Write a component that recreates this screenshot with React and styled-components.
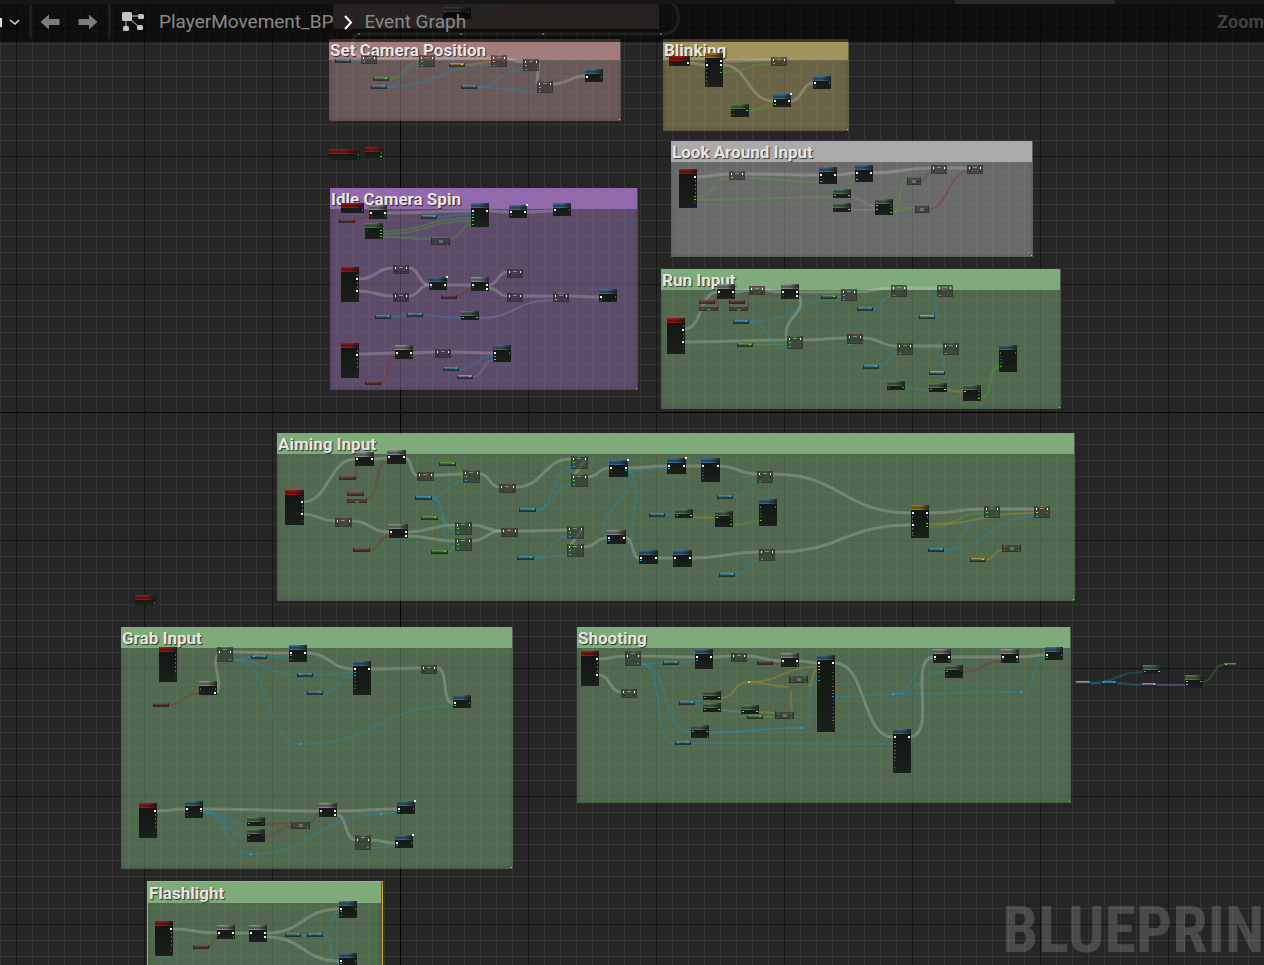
import React from "react";
import styled, { createGlobalStyle, css } from "styled-components";

const GlobalStyle = createGlobalStyle`
  * { box-sizing: border-box; }
  html, body, #root { height: 100%; }
  body {
    margin: 0;
    overflow: hidden;
    background: #262626;
    font-family: Roboto, "Liberation Sans", sans-serif;
  }
`;

const PIN = {
  w: "#f4f4f4",
  b: "#18a4ee",
  g: "#45e412",
  r: "#a80808",
  y: "#ffb91e",
  l: "#a3a6ee",
  m: "#a02a80",
  d: "#5c605c",
  B: "#1d4458",
  G: "#2c6420",
  R: "#4c1414",
  Y: "#80661c",
  P: "#5e3a78",
};

const HEAD = {
  r: ["#a81c1c", "#5e0808"],
  b: ["#467493", "#1c3a50"],
  g: ["#5c8460", "#263f28"],
  k: ["#989898", "#4a4a4a"],
  y: ["#a87d12", "#5c4204"],
};

const TONE = {
  b: "#4a9cc2",
  g: "#5aae42",
  r: "#92494a",
  y: "#c4a24c",
  l: "#a09ccb",
  w: "#a9b8a6",
  k: "#80867f",
};

const WIRE = {
  w: "rgba(225,230,225,0.24)",
  b: "rgba(25,145,200,0.3)",
  g: "rgba(80,180,40,0.3)",
  r: "rgba(150,35,35,0.34)",
  y: "rgba(205,155,30,0.32)",
  l: "rgba(140,145,215,0.3)",
};

/* ---------- graph data ---------- */

const fn = (tone, x, y, w, h, left = "", right = "") => ({ kind: "fn", tone, x, y, w, h, left, right });
const set = (tone, x, y, h = 9, w = 16) => {
  const low = h > 9 ? (tone === "b" ? "" : " b9") : "";
  const t = tone === "r" ? "R" : tone;
  return {
    kind: "set", tone, x, y, w, h,
    left: tone === "b" && h > 9 ? "w3" : `w1 ${t}5${low}`,
    right: tone === "b" && h > 9 ? "w3 b11" : `w1 ${t.toUpperCase()}5`,
  };
};
const get = (tone, x, y, w = 16) => ({ kind: "get", tone, x, y, w, h: 4, left: "", right: tone === "w" ? "b1" : `${tone}1` });
const conv = (x, y) => ({ kind: "get", tone: "b", x, y, w: 16, h: 4, left: "b1", right: "b1" });
const op = (x, y, w, h, left = "", right = "") => ({ kind: "op", tone: "k", x, y, w, h, left, right });
const dot = (tone, x, y) => ({ kind: "dot", tone, x, y, w: 2, h: 2, left: "", right: "" });

const COMMENTS = [
  { title: "", tone: "rose", x: 333, y: -20, w: 326, h: 49 },
  { title: "Set Camera Position", tone: "rose", x: 329, y: 39, w: 292, h: 82 },
  { title: "Blinking", tone: "gold", x: 663, y: 39, w: 186, h: 92 },
  { title: "Look Around Input", tone: "grey", x: 671, y: 141, w: 362, h: 116 },
  { title: "Idle Camera Spin", tone: "violet", x: 330, y: 188, w: 308, h: 202 },
  { title: "Run Input", tone: "green", x: 661, y: 269, w: 400, h: 140 },
  { title: "Aiming Input", tone: "green", x: 277, y: 433, w: 798, h: 168 },
  { title: "Grab Input", tone: "green", x: 121, y: 627, w: 392, h: 242 },
  { title: "Shooting", tone: "green", x: 577, y: 627, w: 494, h: 176 },
  { title: "Flashlight", tone: "green", x: 147, y: 881, w: 236, h: 140, selected: true },
];

const NODES = [
  // upper chain behind the toolbar
  fn("k", 443, 7, 28, 12, "b5", "b5"),
  dot("w", 358, 33), dot("w", 460, 33), dot("w", 542, 33), dot("w", 660, 33),

  // Set Camera Position
  get("b", 335, 59), set("b", 361, 55), get("g", 373, 77), get("b", 371, 85),
  set("g", 419, 55, 12), get("y", 449, 63), set("y", 491, 55, 12), set("g", 523, 59, 12),
  get("b", 461, 85), set("g", 537, 81, 12), fn("b", 585, 69, 18, 13, "w7 B11", "d7"),
  fn("r", 329, 149, 31, 11, "", "R1 d5 B9"), fn("r", 365, 147, 18, 11, "", "R1 d5 g9"),

  // Blinking
  fn("r", 669, 56, 21, 10, "", "w6"),
  fn("y", 705, 53, 18, 34, "d7 w11 d15 d19 d23 d27 G31", "w7 w11 B15 g19"),
  set("g", 771, 57), fn("b", 813, 76, 18, 13, "w6 B10", "d6"),
  fn("b", 773, 94, 18, 13, "w6 g10", "w6"), dot("w", 790, 93),
  fn("g", 731, 104, 18, 13, "G6 G10", "g6"),

  // Look Around Input
  fn("r", 679, 169, 18, 39, "", "w7 d11 d15 d19 d23 g27 g30 B33"),
  set("g", 729, 171), fn("b", 819, 167, 18, 17, "w7 B11 g14", "w7"),
  fn("b", 855, 165, 18, 17, "w7 B11 g14", "w7"),
  fn("g", 833, 189, 18, 9, "B6 g6", "l6"), fn("g", 833, 203, 18, 9, "B6", "l6"),
  fn("g", 875, 199, 18, 16, "l6 l10", "G6 G9 g13"),
  set("r", 931, 165), set("r", 967, 165),
  op(907, 177, 14, 8, "G1 G5", "R3"), op(915, 205, 14, 8, "G1 G5", "R3"),

  // Idle Camera Spin
  fn("r", 341, 203, 23, 10, "", "d6"), fn("k", 369, 205, 18, 14, "w7 r11", "w7 d10"),
  get("r", 339, 219), fn("g", 365, 223, 18, 16, "B7", "g7 g10 g13"), get("b", 421, 215),
  fn("b", 471, 203, 18, 24, "w7 b11 g14 g17 g21", "w7"),
  fn("b", 509, 205, 18, 13, "w6 G10", "w6"), dot("w", 526, 204),
  fn("b", 553, 203, 18, 13, "w6 B10", "d6"), op(431, 237, 19, 8, "G1 G5", "G1 d6"),
  fn("r", 341, 267, 18, 35, "", "d7 w11 d15 d19 w23 R27 B30"),
  set("r", 393, 265), set("r", 393, 293), fn("b", 429, 277, 18, 13, "w7 G10", "w7"),
  dot("w", 446, 276), fn("k", 471, 277, 18, 14, "w7 r10", "w7 w11"), get("r", 441, 295),
  set("r", 507, 269), set("r", 507, 293), set("l", 553, 293),
  fn("b", 599, 289, 18, 13, "w7 B11", "d7"), get("b", 375, 315), conv(407, 313),
  fn("g", 461, 311, 18, 9, "b6", "l6"),
  fn("r", 341, 343, 18, 35, "", "d7 w11 d15 d19 d23 R27 B30"),
  fn("k", 395, 345, 18, 14, "w7 r10", "w7 d10"), set("r", 435, 349),
  fn("b", 493, 345, 18, 17, "w7 b11 l14", "d7"), get("b", 443, 367), get("l", 457, 375), get("r", 365, 381),

  // Run Input
  fn("k", 717, 284, 18, 15, "w7 r11", "w7 d11"), set("r", 749, 286),
  fn("k", 781, 284, 18, 15, "w7 r11", "w7 w11"), get("r", 699, 300), get("r", 729, 300),
  op(699, 306, 19, 5, "r1", "r1"), op(729, 306, 19, 5, "r1", "r1"),
  get("g", 821, 295), set("g", 841, 289, 12), get("b", 857, 307),
  set("r", 891, 285, 12), set("r", 937, 285, 12), get("w", 919, 315),
  fn("r", 667, 318, 18, 36, "", "d7 w11 d15 d19 w23 R27 B30"),
  get("b", 733, 320), get("g", 737, 343), set("g", 787, 336, 13), set("r", 847, 334, 10),
  set("r", 897, 343, 12), set("r", 943, 343, 12), get("b", 863, 365), get("w", 929, 371),
  fn("b", 999, 345, 18, 27, "d7 B11 G14 G17 g21 R25", "d7 R11"),
  fn("g", 887, 381, 18, 9, "G6", "b6"), fn("g", 929, 383, 18, 9, "b6", "y6"),
  fn("g", 963, 385, 18, 16, "y6", "G6 G9 g13"),

  // Aiming Input
  fn("r", 285, 490, 19, 35, "", "B7 w11 d15 d19 w23 R27 B30"),
  fn("k", 355, 452, 19, 14, "w6 R10", "w6"), fn("k", 387, 450, 19, 14, "w6 R10", "w6"),
  get("r", 339, 476, 17), get("r", 347, 492, 17), op(347, 498, 20, 5, "r1", "r1"),
  set("r", 335, 518, 9, 17), fn("k", 389, 524, 19, 14, "w7 r10", "w7 w11"), get("r", 353, 548, 17),
  set("r", 417, 472, 9, 17), get("g", 439, 462, 17), set("g", 463, 470, 13, 17), get("b", 415, 496, 17),
  get("g", 421, 516, 17), set("g", 455, 522, 13, 17), set("g", 455, 538, 13, 17), get("g", 431, 550, 17),
  set("r", 499, 484, 9, 17), set("r", 501, 528, 9, 17), get("b", 519, 508, 17), get("b", 517, 556, 17),
  set("g", 571, 456, 13, 17), set("g", 571, 474, 13, 17), set("g", 567, 526, 13, 17), set("g", 567, 544, 13, 17),
  fn("b", 609, 460, 19, 17, "w7 B11", "w7 b10"), dot("w", 627, 459),
  fn("k", 607, 530, 19, 14, "w7 b10", "w7"), fn("b", 639, 550, 19, 14, "w7 b10", "w7"),
  get("b", 649, 513), fn("g", 675, 509, 18, 9, "b6", "y6"), fn("g", 715, 511, 18, 16, "y6", "G6 G9 g13"),
  fn("b", 667, 458, 19, 16, "w7 b10", "w7"), dot("w", 685, 457),
  fn("b", 701, 458, 19, 24, "w7 B11 B14 G17 P20", "w7"), set("r", 757, 471, 12), get("b", 717, 495),
  fn("b", 759, 499, 18, 27, "d7 B11 G14 G17 g21 R25", "d7 R11"),
  fn("b", 673, 550, 19, 17, "w7 B11 B14", "w7"), set("r", 759, 549, 12), get("b", 719, 573),
  fn("y", 911, 505, 18, 33, "w7 d11 d15 w19 d23 d27 G30", "w7 d11 y18 g21"),
  set("g", 984, 506, 12), set("y", 1034, 506, 12), get("b", 928, 548),
  op(1002, 544, 19, 8, "Y1 Y5", "Y1 d5"), get("y", 970, 558),

  // Grab Input
  fn("r", 135, 595, 21, 10, "", "d7"),
  fn("r", 159, 647, 18, 35, "", "d7 d11 d15 d19 d23 R27 B30"), set("b", 217, 647, 15),
  fn("k", 199, 681, 18, 14, "d7 r10", "d7 w11"), get("r", 153, 703), conv(251, 655),
  fn("b", 289, 645, 18, 17, "w7 b10 G14", "w7"), conv(297, 673), get("b", 307, 691),
  fn("b", 353, 661, 18, 34, "w7 b11 b14 P17 G20 G24 G27 R31", "w7 R11"), set("r", 421, 665),
  fn("b", 453, 695, 18, 13, "w7 b10", "d7"), dot("b", 300, 743),
  fn("r", 139, 803, 18, 35, "", "w7 d11 d15 d19 d23 R27 B30"),
  fn("b", 185, 801, 18, 17, "w7 B11 B14", "w7 b10"), fn("g", 247, 817, 18, 9, "b6", "r6"),
  fn("g", 247, 829, 18, 13, "b6 B10", "r6"), op(291, 821, 19, 8, "r1 r5", "r1 d5"),
  fn("k", 319, 803, 18, 14, "w7 r10", "w7 w11"), set("b", 355, 835, 15),
  fn("b", 397, 801, 18, 13, "w7 b10", "d7"), dot("w", 414, 800),
  fn("b", 395, 835, 18, 13, "w7 b10", "d7"), dot("w", 412, 834),
  dot("b", 250, 853), dot("b", 380, 813),

  // Shooting
  fn("r", 581, 651, 18, 35, "", "w7 d11 d15 d19 w23 R27 B30"), set("b", 625, 651, 15), set("r", 621, 689),
  conv(663, 661), fn("b", 695, 649, 18, 20, "w7 b11 B14 R17", "w7"), set("r", 731, 653), get("r", 757, 661),
  fn("k", 781, 653, 18, 14, "w7 r10", "w7 d11"),
  fn("b", 817, 655, 18, 77, "w7 y11 y14 G17 G21 b25 R28 R31", "w7 R11 R14 G17 G21 B24 B28 Y31 Y35 Y38 b41 B45 B48 P52 B55 G58 G62 Y65 B68 R72"),
  op(789, 675, 19, 8, "Y1 Y5", "Y1 d5"), fn("g", 703, 691, 18, 9, "b6", "y6"), get("b", 679, 701),
  fn("g", 703, 703, 18, 9, "b6", "l6"), fn("g", 741, 705, 18, 9, "l6", "y6"), get("g", 747, 715),
  op(775, 711, 19, 8, "Y1 G5", "Y1 d5"), fn("g", 691, 725, 18, 13, "b6", "b6 d11"), conv(675, 741),
  dot("y", 748, 681), dot("b", 801, 727),
  fn("b", 893, 729, 18, 44, "w7 B11 b14 P17 Y21 P24 Y28 B31 R35 B38 R41", "w7 B11"),
  fn("k", 933, 649, 18, 14, "w7 b10", "w7 d11"), fn("g", 945, 665, 18, 13, "b6 B10", "r6"),
  fn("k", 1001, 649, 18, 14, "w7 r10", "w7 d11"), fn("b", 1045, 647, 18, 13, "w7 b10", "d7"),
  dot("b", 892, 693), dot("b", 1020, 691),

  // loose nodes right of Shooting
  get("w", 1075, 681), conv(1101, 681), fn("g", 1143, 665, 18, 9, "b6", "y6"),
  { kind: "get", tone: "l", x: 1141, y: 683, w: 16, h: 4, left: "b1", right: "l1" },
  fn("g", 1185, 675, 18, 13, "y6 l9", "g6"),
  { kind: "get", tone: "k", x: 1223, y: 663, w: 14, h: 4, left: "g1", right: "m1" },

  // Flashlight
  fn("r", 155, 921, 18, 35, "", "w7 d11 d15 d19 d23 R27 B30"), fn("k", 217, 925, 18, 14, "w7 r10", "w7 d11"),
  fn("k", 249, 925, 18, 17, "w7", "w7 w11 R14"), get("r", 193, 945), get("b", 285, 933), conv(307, 933),
  fn("b", 339, 901, 18, 17, "w7 b10 G14", "d7"), fn("b", 339, 953, 18, 17, "w7 b10 G14", "d7"),
];

// Every run of four numbers is one wire: x1 y1 x2 y2.
const LINKS = {
  w: `377 58 419 58, 435 58 491 58, 507 59 523 62, 553 84 585 76,
    690 63 705 65, 723 61 771 60, 723 65 773 101, 791 101 813 83,
    697 177 729 174, 745 174 819 175, 837 175 855 173, 873 173 931 168, 947 168 967 168,
    387 213 471 211, 489 211 509 212, 527 212 553 211,
    359 279 393 268, 359 291 393 296, 409 268 429 285, 409 296 429 285, 447 285 471 285,
    489 285 507 272, 489 288 507 296, 523 296 553 296, 569 296 599 297,
    359 354 395 353, 413 353 435 352, 451 352 493 353,
    685 329 717 292, 735 292 749 290, 765 290 781 292, 799 292 841 292, 857 292 891 288, 907 288 937 288,
    685 342 787 340, 803 340 847 338, 863 338 897 346, 913 346 943 346,
    303 502 355 459, 374 459 387 458, 405 458 417 475, 433 475 463 474, 480 474 499 487, 516 487 571 459,
    588 477 609 468, 628 468 667 466, 686 466 701 466, 719 466 757 474, 773 474 911 513,
    303 514 335 521, 352 521 389 532, 407 532 455 525, 407 536 455 541, 472 525 501 531, 472 541 501 531,
    518 531 567 530, 584 547 607 538, 626 538 639 558, 658 558 673 558, 692 558 759 552, 775 552 911 525,
    929 513 984 509, 1000 509 1034 509,
    233 652 289 653, 307 653 353 669, 371 669 421 668, 437 668 453 703,
    157 811 185 809, 203 809 319 811, 337 811 397 809, 337 815 355 840, 371 840 395 843,
    599 659 625 656, 641 656 695 657, 713 657 731 656, 747 656 781 661, 799 661 817 663, 835 663 893 737,
    951 657 1001 657, 1019 657 1045 655, 599 675 621 692,
    173 929 217 933, 235 933 249 933, 267 933 339 909, 267 937 339 961`,
  b: `351 61 361 62, 387 87 419 65, 387 87 491 65, 477 87 523 69, 477 87 537 91,
    437 217 471 214, 391 317 407 315, 423 315 461 318, 459 369 493 356,
    749 322 841 299, 749 322 787 347, 873 309 891 296, 935 317 937 296, 879 367 897 354, 943 373 944 354, 905 388 929 390,
    432 498 463 481, 432 498 455 532, 432 498 455 548, 536 510 571 467, 536 510 571 485, 534 558 567 537, 534 558 567 555,
    628 471 667 469, 665 515 675 516, 733 497 757 481, 735 575 759 560, 944 550 984 516, 944 550 1034 516,
    235 660 251 657, 267 657 289 656, 235 660 297 675, 313 675 353 673, 323 693 353 676, 235 660 300 744, 302 744 453 706,
    203 812 247 824, 203 812 247 836, 203 812 250 854, 252 854 380 814, 382 814 397 812, 371 848 395 846,
    641 664 663 663, 679 663 695 661, 641 664 691 732, 641 664 675 743, 691 743 893 744, 709 732 801 728, 709 733 801 728,
    803 728 817 681, 835 697 892 694, 894 694 933 660, 894 694 945 672, 894 694 1020 692, 1022 692 1045 658,
    695 703 703 698, 695 703 703 710,
    1090 683 1101 683, 1090 683 1143 672, 1117 683 1141 685,
    301 935 307 935, 323 935 339 912, 323 935 339 964`,
  g: `389 79 419 62, 723 72 771 64, 749 111 773 105, 697 197 729 178, 745 178 819 182, 697 200 833 197, 847 190 855 180,
    893 212 907 180, 893 212 915 207, 383 231 471 218, 383 234 471 221, 383 237 431 239, 450 239 471 225,
    837 297 841 296, 753 345 787 344, 981 398 999 367, 456 464 463 477, 438 518 455 529, 448 552 455 547,
    733 525 759 521, 929 527 984 513, 763 717 775 717, 1203 682 1223 665`,
  r: `921 181 931 172, 929 209 967 172, 355 221 369 217, 457 297 471 289, 381 383 395 356,
    715 302 717 296, 717 308 719 296, 747 308 749 294, 765 294 781 296,
    356 478 357 463, 367 499 387 462, 370 550 389 536, 169 705 199 693, 265 824 291 823, 265 836 291 827, 310 823 319 814,
    963 672 1001 661, 773 663 781 664, 209 947 217 937`,
  y: `465 65 491 62, 947 390 963 392, 693 517 715 518, 929 524 1034 513, 986 560 1002 550,
    721 698 748 682, 748 682 817 667, 748 682 789 687, 808 686 817 670, 759 712 775 713`,
  l: `851 197 875 206, 851 210 875 210, 479 318 553 300, 473 377 493 360, 721 710 741 712, 1157 685 1185 685`,
};

// Wires that loop back or leave vertically.
const LOOPS = [
  ["w", "M361 57 C350 54 350 34 359 34 H664 C682 34 684 4 666 0"],
  ["w", "M539 63 C538 72 537 76 537 84"],
  ["w", "M799 296 C808 314 780 318 787 340"],
  ["w", "M586 459 L573 477"],
  ["w", "M582 530 L569 547"],
  ["w", "M217 693 C223 680 210 664 219 652"],
  ["w", "M911 737 C937 732 908 660 933 657"],
  ["b", "M628 471 C652 482 588 515 607 539"],
  ["b", "M628 471 C650 476 618 550 639 561"],
  ["b", "M430 30 C438 8 480 12 512 2"],
  ["y", "M792 711 C790 702 792 696 791 690"],
];

const curve = ([x1, y1, x2, y2]) => {
  const d = Math.round((x2 - x1) / 2) + Math.round(Math.max(0, Math.abs(y2 - y1) - (x2 - x1)) / 5);
  return `M${x1} ${y1} C${x1 + d} ${y1} ${x2 - d} ${y2} ${x2} ${y2}`;
};

const PATHS = Object.entries(LINKS)
  .flatMap(([tone, list]) => list.split(",").map((s) => [tone, curve(s.trim().split(/\s+/).map(Number))]))
  .concat(LOOPS);

/* ---------- canvas ---------- */

const Editor = styled.main`
  position: relative;
  height: 100%;
  min-height: 100vh;
  overflow: hidden;
`;

const Canvas = styled.div`
  position: absolute;
  inset: 0;
  overflow: hidden;
  background-color: #262626;
  background-image:
    linear-gradient(#000, #000),
    linear-gradient(#000, #000),
    linear-gradient(90deg, #161616 1px, transparent 1px),
    linear-gradient(#161616 1px, transparent 1px),
    linear-gradient(90deg, #353535 1px, transparent 1px),
    linear-gradient(#353535 1px, transparent 1px);
  background-size: 1px 100%, 100% 1px, 128px 128px, 128px 128px, 16px 16px, 16px 16px;
  background-position: 400px 0, 0 412px, 16px 28px, 16px 28px, 0 12px, 0 12px;
  background-repeat: no-repeat, no-repeat, repeat, repeat, repeat, repeat;
`;

const tones = {
  rose: ["#a37d7b", "rgba(171,139,137,0.5)"],
  gold: ["#a0945c", "rgba(174,160,100,0.5)"],
  grey: ["#aaaaaa", "rgba(174,174,174,0.5)"],
  violet: ["#9368ac", "rgba(148,112,174,0.5)"],
  green: ["#7dab79", "rgba(124,172,120,0.5)"],
};

const CommentBox = styled.section`
  position: absolute;
  left: ${(p) => p.$x}px;
  top: ${(p) => p.$y}px;
  width: ${(p) => p.$w}px;
  height: ${(p) => p.$h}px;
  background: ${(p) => tones[p.$tone][1]};
  box-shadow: inset 0 0 5px rgba(0, 0, 0, 0.22);
  ${(p) => p.$selected && css`
    border: 1px solid #dba91f;
  `}
  &::after {
    content: "";
    position: absolute;
    right: 1px;
    bottom: 1px;
    width: 1px;
    height: 1px;
    background: #c8c8c8;
  }
`;

const CommentTitle = styled.h2`
  margin: 0 1px 0 0;
  height: 21px;
  padding-left: 1px;
  background: ${(p) => tones[p.$tone][0]};
  color: #e6e6e6;
  font-size: 17px;
  line-height: 23px;
  font-weight: 700;
  white-space: nowrap;
  text-shadow: 1px 1px 1px rgba(0, 0, 0, 0.7);
`;

const Wires = styled.svg`
  position: absolute;
  inset: 0;
  width: 100%;
  height: 100%;
  fill: none;
`;

const looks = {
  fn: css`
    background:
      linear-gradient(90deg, transparent 50%, rgba(20, 24, 20, 0.8)) 0 0 / 100% 5px no-repeat,
      linear-gradient(${(p) => HEAD[p.$tone][0]}, ${(p) => HEAD[p.$tone][1]} 3px, ${(p) => HEAD[p.$tone][0]} 5px) 0 0 / 100% 5px no-repeat,
      linear-gradient(#111411, #1b201c);
  `,
  set: css`
    background:
      linear-gradient(90deg, transparent, ${(p) => TONE[p.$tone]}, transparent) 0 0 / 100% 1px no-repeat,
      rgba(38, 38, 38, 0.5);
    box-shadow: inset 0 0 0 1px rgba(20, 20, 20, 0.25);
    &::before {
      content: "";
      position: absolute;
      left: 6px;
      top: 2px;
      width: 4px;
      height: 1px;
      background: #8c8c8c;
    }
  `,
  get: css`
    border-left: 1px solid rgba(30, 30, 30, 0.7);
    border-right: 1px solid rgba(30, 30, 30, 0.7);
    background: linear-gradient(${(p) => TONE[p.$tone]}, rgba(20, 24, 22, 0.7) 75%);
  `,
  op: css`
    background:
      linear-gradient(rgba(170, 175, 170, 0.4), rgba(170, 175, 170, 0.4)) 50% 2px / 4px 3px no-repeat,
      rgba(45, 45, 45, 0.6);
    border: 1px solid rgba(20, 20, 20, 0.4);
    border-top-color: #626661;
  `,
  dot: css`
    background: ${(p) => PIN[p.$tone]};
  `,
};

const NodeBox = styled.div`
  position: absolute;
  left: ${(p) => p.$x}px;
  top: ${(p) => p.$y}px;
  width: ${(p) => p.$w}px;
  height: ${(p) => p.$h}px;
  ${(p) => looks[p.$kind]}
`;

const Pin = styled.span`
  position: absolute;
  top: ${(p) => p.$y}px;
  ${(p) => p.$side}: ${(p) => (p.$thin ? 2 : 1)}px;
  width: ${(p) => (p.$thin && p.$tone === "w" ? 1 : p.$tone === "d" ? 1 : 2)}px;
  height: ${(p) => (p.$tone === "w" || p.$tone === "d" ? 2 : 1)}px;
  margin-top: ${(p) => (p.$thin ? 1 : 0)}px;
  background: ${(p) => PIN[p.$tone]};
`;

const Watermark = styled.p`
  position: absolute;
  right: -34px;
  bottom: -2px;
  margin: 0;
  color: rgba(255, 255, 255, 0.17);
  font-family: "Roboto Condensed", "Liberation Sans Narrow", Roboto, sans-serif;
  font-size: 64px;
  line-height: 72px;
  font-weight: 700;
  white-space: nowrap;
`;

/* ---------- toolbar ---------- */

const TabStrip = styled.div`
  display: flex;
  justify-content: flex-end;
  height: 4px;
  padding-right: 149px;
  background: #161616;
`;

const TabEdge = styled.div`
  width: 160px;
  background: #2a2a2a;
`;

const Header = styled.header`
  position: absolute;
  inset: 0 0 auto 0;
`;

const Toolbar = styled.div`
  display: flex;
  align-items: center;
  height: 38px;
  padding-bottom: 2px;
  background: rgba(0, 0, 0, 0.62);
`;

const Tool = styled.button`
  display: flex;
  align-items: center;
  justify-content: center;
  width: ${(p) => p.$w}px;
  height: 34px;
  padding: 0;
  border: 0;
  background: none;
  color: ${(p) => p.$color || "#7c7c7c"};
`;

const Divider = styled.span`
  width: 3px;
  height: 34px;
  background: #1e1e1e;
`;

const Crumbs = styled.nav`
  display: flex;
  align-items: center;
  gap: 11px;
  margin-left: 4px;
`;

const Crumb = styled.a`
  color: #8a8a8a;
  font-size: 19px;
  line-height: 24px;
  text-decoration: none;
`;

const Zoom = styled.output`
  margin-left: auto;
  color: #424242;
  font-size: 18px;
  line-height: 24px;
  font-weight: 700;
`;

const Arrow = ({ flip }) => (
  <svg width="20" height="16" viewBox="0 0 20 16" fill="currentColor">
    <path d={flip ? "M19.5 8 11 .5V5H.5v6H11v4.500z" : "M.5 8 9 .5V5h10.500v6H9v4.500z"} />
  </svg>
);

const GraphIcon = () => (
  <svg width="24" height="22" viewBox="0 0 24 22" fill="currentColor">
    <path d="M6 5h14M5 7v11M8 7l10 9" stroke="currentColor" strokeWidth="1" fill="none" />
    <rect x="1" y="1" width="10" height="9" rx="1.500" />
    <rect x="17" y="3" width="6" height="5" rx="1.500" />
    <rect x="2" y="15" width="6" height="5" rx="1.500" />
    <rect x="16" y="14" width="6" height="5" rx="1.500" />
  </svg>
);

const pins = (node, side) =>
  node[side]
    .split(" ")
    .filter(Boolean)
    .map((s, i) => (
      <Pin key={side + i} $side={side} $thin={node.kind === "set"} $tone={s[0]} $y={Number(s.slice(1))} />
    ));

export default function App() {
  return (
    <>
      <GlobalStyle />
      <Editor>
        <Canvas>
          <Watermark>BLUEPRINT</Watermark>
          {COMMENTS.map((c, i) => (
            <CommentBox key={i} $x={c.x} $y={c.y} $w={c.w} $h={c.h} $tone={c.tone} $selected={c.selected}>
              {c.title && <CommentTitle $tone={c.tone}>{c.title}</CommentTitle>}
            </CommentBox>
          ))}
          <Wires aria-hidden="true">
            {PATHS.map(([tone, d], i) => (
              <path key={i} d={d} stroke={WIRE[tone]} strokeWidth={tone === "w" ? 3 : 2} />
            ))}
          </Wires>
          {NODES.map((n, i) => (
            <NodeBox key={i} $kind={n.kind} $tone={n.tone} $x={n.x} $y={n.y} $w={n.w} $h={n.h}>
              {pins(n, "left")}
              {pins(n, "right")}
            </NodeBox>
          ))}
        </Canvas>
        <Header>
          <TabStrip>
            <TabEdge />
          </TabStrip>
          <Toolbar>
            <Tool $w={29} $color="#dcdcdc" aria-label="Favorites">
              <svg width="29" height="16" viewBox="0 0 29 16" fill="none">
                <path d="M0 4h2v9H0z" fill="currentColor" />
                <path d="M10 6l5 4 4-4" stroke="currentColor" strokeWidth="1.500" />
              </svg>
            </Tool>
            <Divider />
            <Tool $w={35} aria-label="Back"><Arrow /></Tool>
            <Tool $w={41} aria-label="Forward"><Arrow flip /></Tool>
            <Divider />
            <Tool $w={44} $color="#c4c4c4" aria-label="Graph"><GraphIcon /></Tool>
            <Crumbs aria-label="Breadcrumb">
              <Crumb href="#blueprint">PlayerMovement_BP</Crumb>
              <svg width="9" height="15" viewBox="0 0 9 15" fill="none" stroke="#fff" strokeWidth="2">
                <path d="M1 1l6 6.500L1 14" />
              </svg>
              <Crumb href="#graph">Event Graph</Crumb>
            </Crumbs>
            <Zoom>Zoom</Zoom>
          </Toolbar>
        </Header>
      </Editor>
    </>
  );
}
